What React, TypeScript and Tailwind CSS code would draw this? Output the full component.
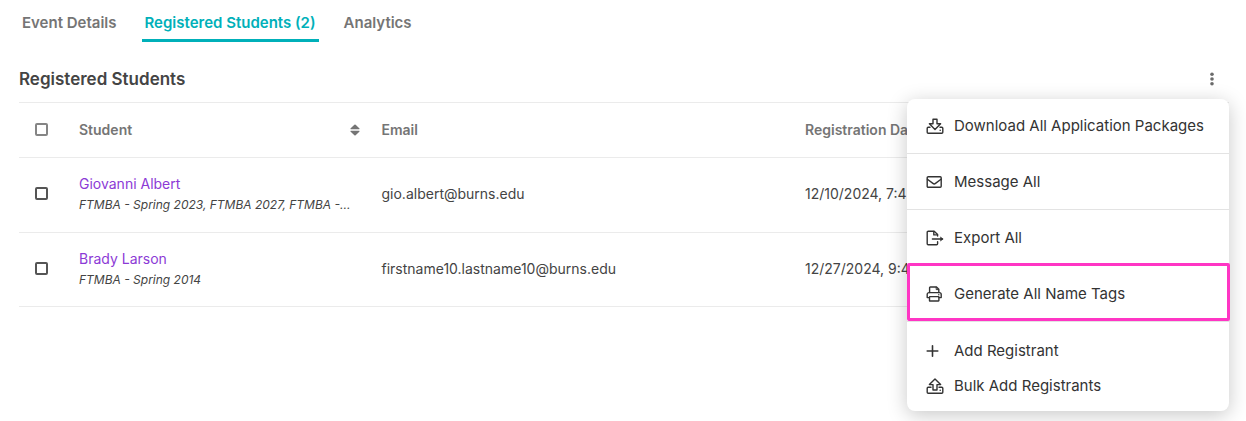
import type { ReactNode } from 'react';

const tabs = [
  { label: 'Event Details', active: false },
  { label: 'Registered Students (2)', active: true },
  { label: 'Analytics', active: false },
];

const students = [
  {
    name: 'Giovanni Albert',
    programs: 'FTMBA - Spring 2023, FTMBA 2027, FTMBA -...',
    email: 'gio.albert@burns.edu',
    date: '12/10/2024, 7:42 AM',
  },
  {
    name: 'Brady Larson',
    programs: 'FTMBA - Spring 2014',
    email: 'firstname10.lastname10@burns.edu',
    date: '12/27/2024, 9:41 AM',
  },
];

function Icon({ children }: { children: ReactNode }) {
  return (
    <svg
      width="18"
      height="16"
      viewBox="0 0 18 16"
      fill="none"
      stroke="currentColor"
      strokeWidth="1.4"
      strokeLinejoin="round"
      strokeLinecap="round"
      aria-hidden="true"
      className="shrink-0"
    >
      {children}
    </svg>
  );
}

function DownloadIcon() {
  return (
    <Icon>
      <path d="M7 1.2h4v4.6h3.6L9 11.6 3.4 5.8H7z" />
      <path d="M4 9.3H2.2a1 1 0 0 0-1 1v3.9a1 1 0 0 0 1 1h13.6a1 1 0 0 0 1-1v-3.9a1 1 0 0 0-1-1H14" />
      <circle cx="14.2" cy="12.3" r="0.8" fill="currentColor" stroke="none" />
    </Icon>
  );
}

function UploadIcon() {
  return (
    <Icon>
      <path d="M7 12V6.6H3.4L9 .9l5.6 5.7H11V12z" />
      <path d="M5 9.3H2.2a1 1 0 0 0-1 1v3.9a1 1 0 0 0 1 1h13.6a1 1 0 0 0 1-1v-3.9a1 1 0 0 0-1-1H13" />
      <circle cx="14.2" cy="12.3" r="0.8" fill="currentColor" stroke="none" />
    </Icon>
  );
}

function MailIcon() {
  return (
    <Icon>
      <rect x="1.2" y="2.7" width="14" height="10.6" rx="1" />
      <path d="M1.4 5.2l5.5 4.2a2.1 2.1 0 0 0 2.6 0L15 5.2" />
    </Icon>
  );
}

function ExportIcon() {
  return (
    <Icon>
      <path d="M11.6 6V4.6L8.2 1.2H2.2a1 1 0 0 0-1 1v11.6a1 1 0 0 0 1 1h8.4a1 1 0 0 0 1-1v-2" />
      <path d="M7.8 1.4v3.5h3.6" />
      <path d="M6.4 9h10.2" />
      <path d="M14.8 7.2L17 9l-2.2 1.8z" fill="currentColor" strokeWidth="0.6" />
    </Icon>
  );
}

function PrintIcon() {
  return (
    <Icon>
      <path d="M3.6 6.6V1.7a.7.7 0 0 1 .7-.7h6.2l2.3 2.3v3.3" />
      <path d="M10.2 1.2v2.4h2.4" strokeWidth="1" />
      <path d="M3.4 11.6H1.2V8.4a1.8 1.8 0 0 1 1.8-1.8h10.4a1.8 1.8 0 0 1 1.8 1.8v3.2H13" />
      <rect x="3.5" y="10.6" width="9.4" height="4.4" rx="0.4" />
      <circle cx="12.8" cy="8.7" r="0.7" fill="currentColor" stroke="none" />
    </Icon>
  );
}

function PlusIcon() {
  return (
    <Icon>
      <path d="M6.5 2.7v10.6M1.2 8h10.6" strokeWidth="1.6" />
    </Icon>
  );
}

type MenuItemProps = {
  icon: ReactNode;
  label: string;
  highlighted?: boolean;
};

function MenuItem({ icon, label, highlighted }: MenuItemProps) {
  return (
    <button
      type="button"
      role="menuitem"
      className="relative flex h-14 w-full items-center gap-2.5 whitespace-nowrap border-b border-[#e3e3e3] px-[19px] text-left first:h-[55px]"
    >
      {icon}
      {label}
      {highlighted && (
        <span className="absolute -top-[3px] -right-px bottom-0 left-0 rounded-xs border-3 border-[#ff35c4]" />
      )}
    </button>
  );
}

function CompactMenuItem({ icon, label }: MenuItemProps) {
  return (
    <button
      type="button"
      role="menuitem"
      className="flex h-[35px] w-full items-center gap-2.5 whitespace-nowrap px-[19px] text-left"
    >
      {icon}
      {label}
    </button>
  );
}

function ActionsMenu() {
  return (
    <div className="relative">
      <button
        type="button"
        aria-label="More actions"
        aria-haspopup="menu"
        aria-expanded="true"
        className="flex h-10 w-[34px] items-center justify-center text-[#6b6b6b]"
      >
        <svg width="4" height="14" viewBox="0 0 4 14" fill="currentColor" aria-hidden="true">
          <circle cx="2" cy="2.2" r="1.8" />
          <circle cx="2" cy="7" r="1.8" />
          <circle cx="2" cy="11.8" r="1.8" />
        </svg>
      </button>
      <div
        role="menu"
        className="absolute top-full right-0 z-10 w-[322px] rounded-lg bg-white pb-2 text-[15px] text-[#333] shadow-[0_4px_20px_rgba(0,0,0,0.22)]"
      >
        <MenuItem icon={<DownloadIcon />} label="Download All Application Packages" />
        <MenuItem icon={<MailIcon />} label="Message All" />
        <MenuItem icon={<ExportIcon />} label="Export All" />
        <MenuItem icon={<PrintIcon />} label="Generate All Name Tags" highlighted />
        <div className="pt-[11px]">
          <CompactMenuItem icon={<PlusIcon />} label="Add Registrant" />
          <CompactMenuItem icon={<UploadIcon />} label="Bulk Add Registrants" />
        </div>
      </div>
    </div>
  );
}

export default function App() {
  return (
    <main className="min-h-screen bg-white pr-[17px] pl-[19px] font-['Inter',sans-serif] text-sm text-[#444]">
      <nav className="flex gap-[22px]">
        {tabs.map((tab) => (
          <a
            key={tab.label}
            href="#"
            aria-current={tab.active ? 'page' : undefined}
            className={
              tab.active
                ? 'flex h-[42px] items-center border-b-3 border-[#00b0b9] px-[3px] pt-1.5 text-[15px] font-semibold text-[#00b0b9]'
                : 'flex h-[42px] items-center border-b-3 border-transparent px-[3px] pt-1.5 text-[15px] font-semibold text-[#757575]'
            }
          >
            {tab.label}
          </a>
        ))}
      </nav>

      <section className="pt-[17px]">
        <header className="flex items-center justify-between pb-[3px]">
          <h2 className="text-[17px] font-semibold">Registered Students</h2>
          <ActionsMenu />
        </header>

        <table className="w-full table-fixed border-t border-[#ebebeb] text-left">
          <colgroup>
            <col className="w-[60px]" />
            <col className="w-[25%]" />
            <col className="w-[35%]" />
            <col />
          </colgroup>
          <thead>
            <tr className="h-[55px] border-b border-[#ebebeb] text-[#757575]">
              <th className="pb-0.5 pl-4">
                <input
                  type="checkbox"
                  aria-label="Select all students"
                  className="block size-[13px] appearance-none rounded-xs border-2 border-[#858585]"
                />
              </th>
              <th className="pr-[22px] font-semibold">
                <button type="button" className="flex w-full items-center justify-between">
                  Student
                  <svg width="10" height="12" viewBox="0 0 10 12" fill="currentColor" aria-hidden="true">
                    <path d="M4.4.7a.9.9 0 0 1 1.2 0L9.3 4.2c.5.5.2 1-.4 1H1.1c-.6 0-.9-.5-.4-1z" />
                    <path d="M4.4 11.3a.9.9 0 0 0 1.2 0L9.3 7.8c.5-.5.2-1-.4-1H1.1c-.6 0-.9.5-.4 1z" />
                  </svg>
                </button>
              </th>
              <th className="font-semibold">Email</th>
              <th className="font-semibold whitespace-nowrap">Registration Date</th>
            </tr>
          </thead>
          <tbody>
            {students.map((student) => (
              <tr key={student.name} className="h-[75px] border-b border-[#ebebeb] last:h-[74px]">
                <td className="pb-[3px] pl-4">
                  <input
                    type="checkbox"
                    aria-label={`Select ${student.name}`}
                    className="block size-[13px] appearance-none rounded-xs border-2 border-[#555]"
                  />
                </td>
                <td className="pb-0.5">
                  <a href="#" className="block leading-[22px] text-[#8c3ad6]">
                    {student.name}
                  </a>
                  <p className="text-xs leading-5 italic whitespace-nowrap">{student.programs}</p>
                </td>
                <td className="pb-0.5">{student.email}</td>
                <td className="pb-0.5 whitespace-nowrap">{student.date}</td>
              </tr>
            ))}
          </tbody>
        </table>
      </section>
    </main>
  );
}
